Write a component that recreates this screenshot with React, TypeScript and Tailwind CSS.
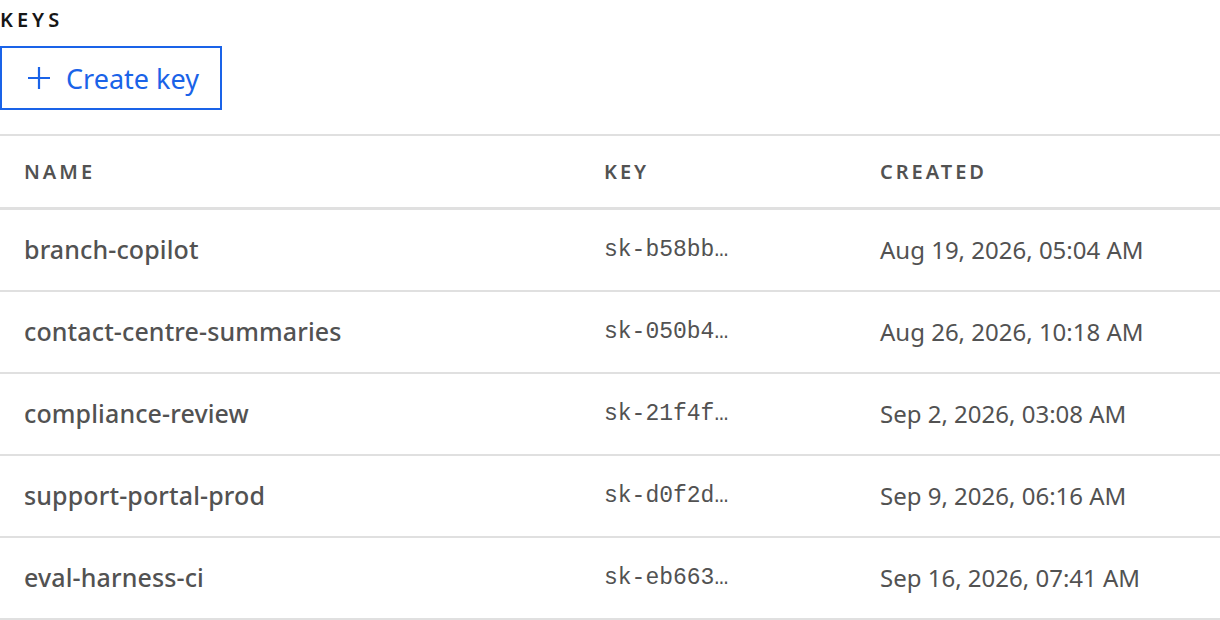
import React from 'react';

const keys = [
  { name: 'branch-copilot', key: 'sk-b58bb…', created: 'Aug 19, 2026, 05:04 AM' },
  { name: 'contact-centre-summaries', key: 'sk-050b4…', created: 'Aug 26, 2026, 10:18 AM' },
  { name: 'compliance-review', key: 'sk-21f4f…', created: 'Sep 2, 2026, 03:08 AM' },
  { name: 'support-portal-prod', key: 'sk-d0f2d…', created: 'Sep 9, 2026, 06:16 AM' },
  { name: 'eval-harness-ci', key: 'sk-eb663…', created: 'Sep 16, 2026, 07:41 AM' },
];

export default function App() {
  return (
    <div className="w-[1220px] h-[620px] bg-white overflow-hidden font-['Noto_Sans',sans-serif]">
      {/* Heading */}
      <h2 className="h-[46px] pt-[6px] text-[20px] leading-[28px] font-semibold tracking-[0.2em] text-[#161616]">
        KEYS
      </h2>

      {/* Create key button */}
      <button className="flex items-center gap-[15px] h-[64px] w-[222px] pl-[25px] border-2 border-[#1a63e8] text-[#1a63e8] text-[27px] bg-white">
        <svg width="24" height="24" viewBox="0 0 24 24" fill="none" stroke="currentColor" strokeWidth="2.2">
          <path d="M12 1v22M1 12h22" />
        </svg>
        <span className="leading-none">Create key</span>
      </button>

      {/* Table */}
      <div className="mt-[24px] border-t-2 border-[#e0e0e0]">
        <div className="grid grid-cols-[580px_276px_1fr] h-[74px] items-center border-b-[3px] border-[#e0e0e0] text-[20px] font-semibold tracking-[0.15em] text-[#525252]">
          <div className="pl-[24px]">NAME</div>
          <div className="pl-[24px]">KEY</div>
          <div className="pl-[24px]">CREATED</div>
        </div>
        {keys.map((k) => (
          <div
            key={k.name}
            className="grid grid-cols-[580px_276px_1fr] h-[82px] items-center border-b-2 border-[#e0e0e0] text-[#525252]"
          >
            <div className="pl-[24px] text-[25px] font-medium tracking-[0.005em]">{k.name}</div>
            <div className="pl-[24px] text-[23px] font-['Liberation_Mono',monospace]">{k.key}</div>
            <div className="pl-[24px] text-[24px]">{k.created}</div>
          </div>
        ))}
      </div>
    </div>
  );
}
